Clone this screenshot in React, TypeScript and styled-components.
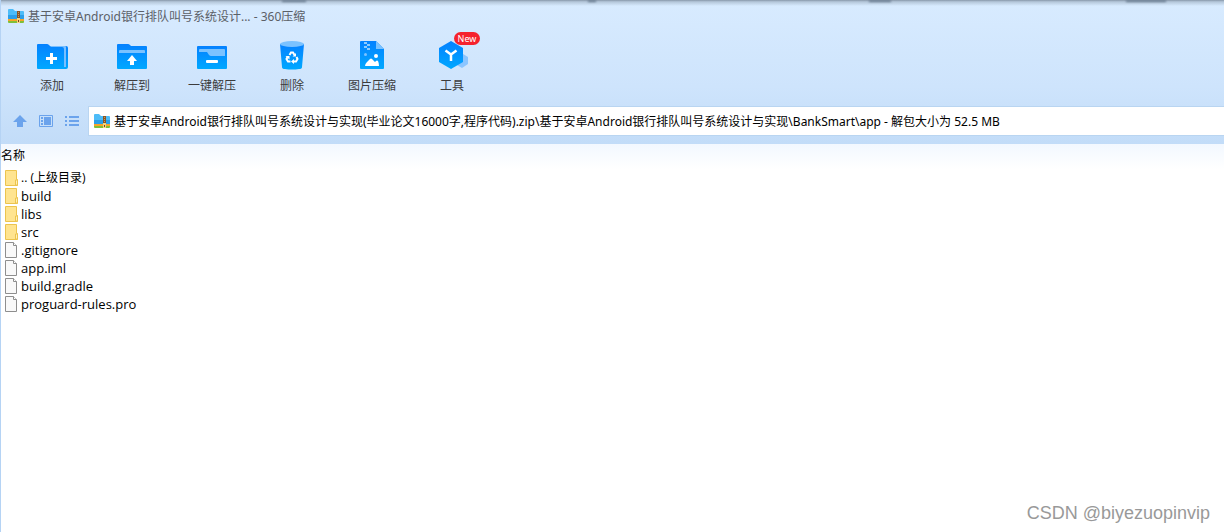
import React from 'react';
import styled, { createGlobalStyle } from 'styled-components';

const GlobalStyle = createGlobalStyle`
  * { box-sizing: border-box; }
  body {
    margin: 0;
    background: #fff;
    font-family: "Noto Sans", "Noto Sans CJK SC", sans-serif;
    font-size: 12px;
    line-height: 18px;
    color: #000;
  }
`;

const Window = styled.div`
  display: flex;
  flex-direction: column;
  min-height: 100vh;
  border-left: 1px solid #b5d3f4;
`;

const Header = styled.header`
  position: relative;
  padding: 7px 0 8px;
  background: linear-gradient(#d8ebff, #cee4fc 60%, #c2dcf8);
`;

const TopShadow = styled.div`
  position: absolute;
  top: 0;
  left: 0;
  right: 0;
  height: 6px;
  background: linear-gradient(#8797a9, #b4c6d9 30%, rgba(216, 235, 255, 0));
`;

const ShadowMark = styled.span<{ $left: string; $width: number }>`
  position: absolute;
  top: 0;
  left: ${(p) => p.$left};
  width: ${(p) => p.$width}px;
  height: 2px;
  background: #65788d;
  filter: blur(1px);
`;

const TitleBar = styled.div`
  display: flex;
  align-items: center;
  gap: 4px;
  height: 19px;
  padding-left: 7px;
`;

const Title = styled.h1`
  margin: 0;
  font-size: 12px;
  font-weight: 400;
  color: #5b6067;
`;

const Toolbar = styled.nav`
  display: flex;
  padding: 14px 0 0 11px;
`;

const ToolButton = styled.button`
  position: relative;
  display: flex;
  flex-direction: column;
  align-items: center;
  gap: 5px;
  width: 80px;
  padding: 0;
  border: 0;
  background: none;
  font: inherit;
  color: #3c3c3c;
  white-space: nowrap;

  svg { display: block; }
`;

const Badge = styled.span`
  position: absolute;
  top: -8px;
  left: 42px;
  width: 26px;
  height: 13px;
  border-radius: 7px;
  background: #f5222d;
  color: #fff;
  font-size: 9px;
  line-height: 13px;
  text-align: center;
`;

const AddressRow = styled.div`
  display: flex;
  align-items: center;
  padding-top: 11px;
`;

const NavButtons = styled.div`
  display: flex;
  gap: 10px;
  width: 87px;
  padding-left: 11px;
`;

const NavButton = styled.button`
  width: 16px;
  height: 16px;
  padding: 0;
  border: 0;
  background: none;

  svg { display: block; }
`;

const AddressBox = styled.label`
  display: flex;
  flex: 1;
  align-items: center;
  gap: 4px;
  height: 30px;
  padding-left: 5px;
  border: 1px solid #b9d5f1;
  border-right: 0;
  background: #fff;
`;

const AddressInput = styled.input`
  flex: 1;
  min-width: 0;
  padding: 1px 0 0;
  border: 0;
  outline: 0;
  background: none;
  font: inherit;
  color: #000;
`;

const FileTable = styled.table`
  width: 100%;
  border-collapse: collapse;
`;

const HeadCell = styled.th`
  height: 25px;
  padding: 0 0 2px;
  background: linear-gradient(#f2f8ff, #fff);
  font-weight: 400;
  text-align: left;
`;

const FileCell = styled.td`
  height: 18px;
  padding: 0 0 0 4px;
`;

const FileName = styled.div<{ $parent?: boolean }>`
  display: flex;
  align-items: center;
  gap: 3px;
  font-family: "Open Sans", "Noto Sans CJK SC", sans-serif;
  font-size: ${(p) => (p.$parent ? 12 : 13)}px;
  line-height: 18px;

  svg { flex: none; }
`;

const Watermark = styled.div`
  margin-top: auto;
  padding: 0 14px 8px 0;
  text-align: right;
  font-family: "Liberation Sans", sans-serif;
  font-size: 18px;
  line-height: 22px;
  color: #999;
`;

const ArchiveIcon = () => (
  <svg width="16" height="15" viewBox="0 0 16 15" aria-hidden="true">
    <path d="M0 1q0-1 1-1h4l2 2h8q1 0 1 1v9H0z" fill="#4dbcf8" />
    <path d="M0 6h16v5H0z" fill="#2c9fe9" />
    <path d="M0 10h16v2H0z" fill="#f7a428" />
    <path d="M0 12h16v1q0 1-1 1H1q-1 0-1-1z" fill="#7fbf3a" />
    <path d="M9 2h3v12H9z" fill="#8a5526" />
    <path d="M10.500 3v6" stroke="#c69a5a" strokeDasharray="1 1" />
    <path d="M9 9h3v5H9z" fill="#f6d27c" />
    <path d="M10 11h1v2h-1z" fill="#76451e" />
  </svg>
);

const Gradient = ({ id }: { id: string }) => (
  <defs>
    <linearGradient id={id} x1="0" y1="0" x2="0" y2="1">
      <stop offset="0" stopColor="#0581ff" />
      <stop offset="1" stopColor="#00a8ff" />
    </linearGradient>
  </defs>
);

const ToolIcon = ({ id, children }: { id: string; children: React.ReactNode }) => (
  <svg width="32" height="32" viewBox="0 0 32 32" aria-hidden="true">
    <Gradient id={id} />
    {children}
  </svg>
);

const AddIcon = () => (
  <ToolIcon id="add">
    <path d="M14 6h16q2 0 2 2v19q0 2-2 2H14z" fill="url(#add)" />
    <path d="M12 6h17q1 0 1 1v20h-3V9H12z" fill="#79bfff" />
    <path d="M1 5q0-1 1-1h9q1 0 2 1l2 2h11q2 0 2 2v20H2q-1 0-1-1z" fill="url(#add)" />
    <path d="M15.500 13v11M10 18.500h11" stroke="#fff" strokeWidth="3" />
  </ToolIcon>
);

const ExtractIcon = () => (
  <ToolIcon id="extract">
    <path d="M1 5q0-1 1-1h10q1 0 2 1l1 1h15q1 0 1 1v21q0 1-1 1H2q-1 0-1-1z" fill="url(#extract)" />
    <path d="M3 13v-2q0-1 1-1h24q1 0 1 1v2z" fill="#7bc2ff" />
    <path d="M16 15l5 6h-3v4h-4v-4h-3z" fill="#fff" />
  </ToolIcon>
);

const QuickIcon = () => (
  <ToolIcon id="quick">
    <rect x="1" y="6" width="30" height="23" rx="1" fill="url(#quick)" />
    <path d="M3 12v-2q0-1 1-1h24q1 0 1 1v6H15q-1 0-2-1l-2-3z" fill="#7bc2ff" />
    <rect x="10" y="20" width="12" height="3" rx="1" fill="#fff" />
  </ToolIcon>
);

const TrashIcon = () => (
  <ToolIcon id="trash">
    <path d="M4 4h24l-2 23q0 2-3 2-7 1-14 0-3 0-3-2z" fill="url(#trash)" />
    <ellipse cx="16" cy="4" rx="12" ry="3" fill="#7bc2ff" />
    <g fill="none" stroke="#fff" strokeWidth="2">
      <path d="M13.500 15l1.500-2.500h2l1.500 2.500" />
      <path d="M20.500 17l1 2-1.500 2.500h-2.500" />
      <path d="M14.500 21.500H12L10.500 19l1-2" />
    </g>
    <path d="M20 13v3.500h-3.500zM18 19v5l-3-2.500zM9.500 16h4v3.500z" fill="#fff" />
  </ToolIcon>
);

const ImageIcon = () => (
  <ToolIcon id="image">
    <path d="M4 2q0-1 1-1h15l8 8v19q0 1-1 1H5q-1 0-1-1z" fill="url(#image)" />
    <path d="M20 1l8 8h-8z" fill="#7bc2ff" />
    <path d="M8 2h3v2H8zM11 4h3v2h-3zM8 6h3v2H8zM11 8h3v2h-3z" fill="#8fcbff" />
    <circle cx="9.500" cy="14.500" r="1.500" fill="#7bc2ff" />
    <circle cx="20" cy="16" r="2" fill="#fff" />
    <path d="M9 26q0-2 2-4l3-3q1-1 2 0l3 3 1-1q1-1 2 0 1 2 1 5z" fill="#fff" />
  </ToolIcon>
);

const ToolsIcon = () => (
  <ToolIcon id="tools">
    <path d="M27 14l5 3v7l-6 4-5-3v-5z" fill="#8bc5ff" />
    <path d="M15 1l12 7v14l-12 7-12-7V8z" fill="url(#tools)" />
    <path d="M9.500 10.500l5.500 4 5.500-4M15 14.500V21" fill="none" stroke="#fff" strokeWidth="2.500" />
  </ToolIcon>
);

const FolderIcon = () => (
  <svg width="13" height="16" viewBox="0 0 13 16" aria-hidden="true">
    <path d="M.5.500h11v9h1v6H.5z" fill="#ffe48f" stroke="#ecc44e" />
    <path d="M10.500 15v-5h2v5z" fill="#fff0b8" stroke="#ecc44e" />
  </svg>
);

const FileIcon = () => (
  <svg width="13" height="16" viewBox="0 0 13 16" aria-hidden="true">
    <path d="M.5.500h8l3 3v12H.5z" fill="#f9f9f9" stroke="#8e8e8e" />
    <path d="M8.500.500v3h3" fill="#fff" stroke="#8e8e8e" />
  </svg>
);

const tools = [
  { label: '添加', icon: <AddIcon /> },
  { label: '解压到', icon: <ExtractIcon /> },
  { label: '一键解压', icon: <QuickIcon /> },
  { label: '删除', icon: <TrashIcon /> },
  { label: '图片压缩', icon: <ImageIcon /> },
  { label: '工具', icon: <ToolsIcon />, badge: 'New' },
];

const files = [
  { name: '.. (上级目录)', folder: true, parent: true },
  { name: 'build', folder: true },
  { name: 'libs', folder: true },
  { name: 'src', folder: true },
  { name: '.gitignore', folder: false },
  { name: 'app.iml', folder: false },
  { name: 'build.gradle', folder: false },
  { name: 'proguard-rules.pro', folder: false },
];

const address =
  '基于安卓Android银行排队叫号系统设计与实现(毕业论文16000字,程序代码).zip\\基于安卓Android银行排队叫号系统设计与实现\\BankSmart\\app - 解包大小为 52.5 MB';

export default function App() {
  return (
    <Window>
      <GlobalStyle />
      <Header>
        <TopShadow>
          <ShadowMark $left="23%" $width={24} />
          <ShadowMark $left="48%" $width={8} />
          <ShadowMark $left="71%" $width={22} />
          <ShadowMark $left="92%" $width={40} />
        </TopShadow>
        <TitleBar>
          <ArchiveIcon />
          <Title>基于安卓Android银行排队叫号系统设计... - 360压缩</Title>
        </TitleBar>
        <Toolbar>
          {tools.map((tool) => (
            <ToolButton key={tool.label} type="button">
              {tool.icon}
              {tool.label}
              {tool.badge && <Badge>{tool.badge}</Badge>}
            </ToolButton>
          ))}
        </Toolbar>
        <AddressRow>
          <NavButtons>
            <NavButton type="button" aria-label="向上">
              <svg width="16" height="16" viewBox="0 0 16 16">
                <path d="M8 2l7 7h-4v5H5V9H1z" fill="#6ba3ec" />
              </svg>
            </NavButton>
            <NavButton type="button" aria-label="预览">
              <svg width="16" height="16" viewBox="0 0 16 16">
                <path d="M1.500 2.500h13v11h-13z" fill="none" stroke="#6ba3ec" />
                <path d="M6 4h7v8H6zM3 4h2v2H3zM3 7h2v2H3zM3 10h2v2H3z" fill="#6ba3ec" />
              </svg>
            </NavButton>
            <NavButton type="button" aria-label="列表">
              <svg width="16" height="16" viewBox="0 0 16 16">
                <path d="M1 3h2v2H1zM1 7h2v2H1zM1 11h2v2H1zM5 3h10v2H5zM5 7h10v2H5zM5 11h10v2H5z" fill="#6ba3ec" />
              </svg>
            </NavButton>
          </NavButtons>
          <AddressBox>
            <ArchiveIcon />
            <AddressInput aria-label="路径" defaultValue={address} />
          </AddressBox>
        </AddressRow>
      </Header>
      <FileTable>
        <thead>
          <tr>
            <HeadCell scope="col">名称</HeadCell>
          </tr>
        </thead>
        <tbody>
          {files.map((file) => (
            <tr key={file.name}>
              <FileCell>
                <FileName $parent={file.parent}>
                  {file.folder ? <FolderIcon /> : <FileIcon />}
                  {file.name}
                </FileName>
              </FileCell>
            </tr>
          ))}
        </tbody>
      </FileTable>
      <Watermark>CSDN @biyezuopinvip</Watermark>
    </Window>
  );
}
